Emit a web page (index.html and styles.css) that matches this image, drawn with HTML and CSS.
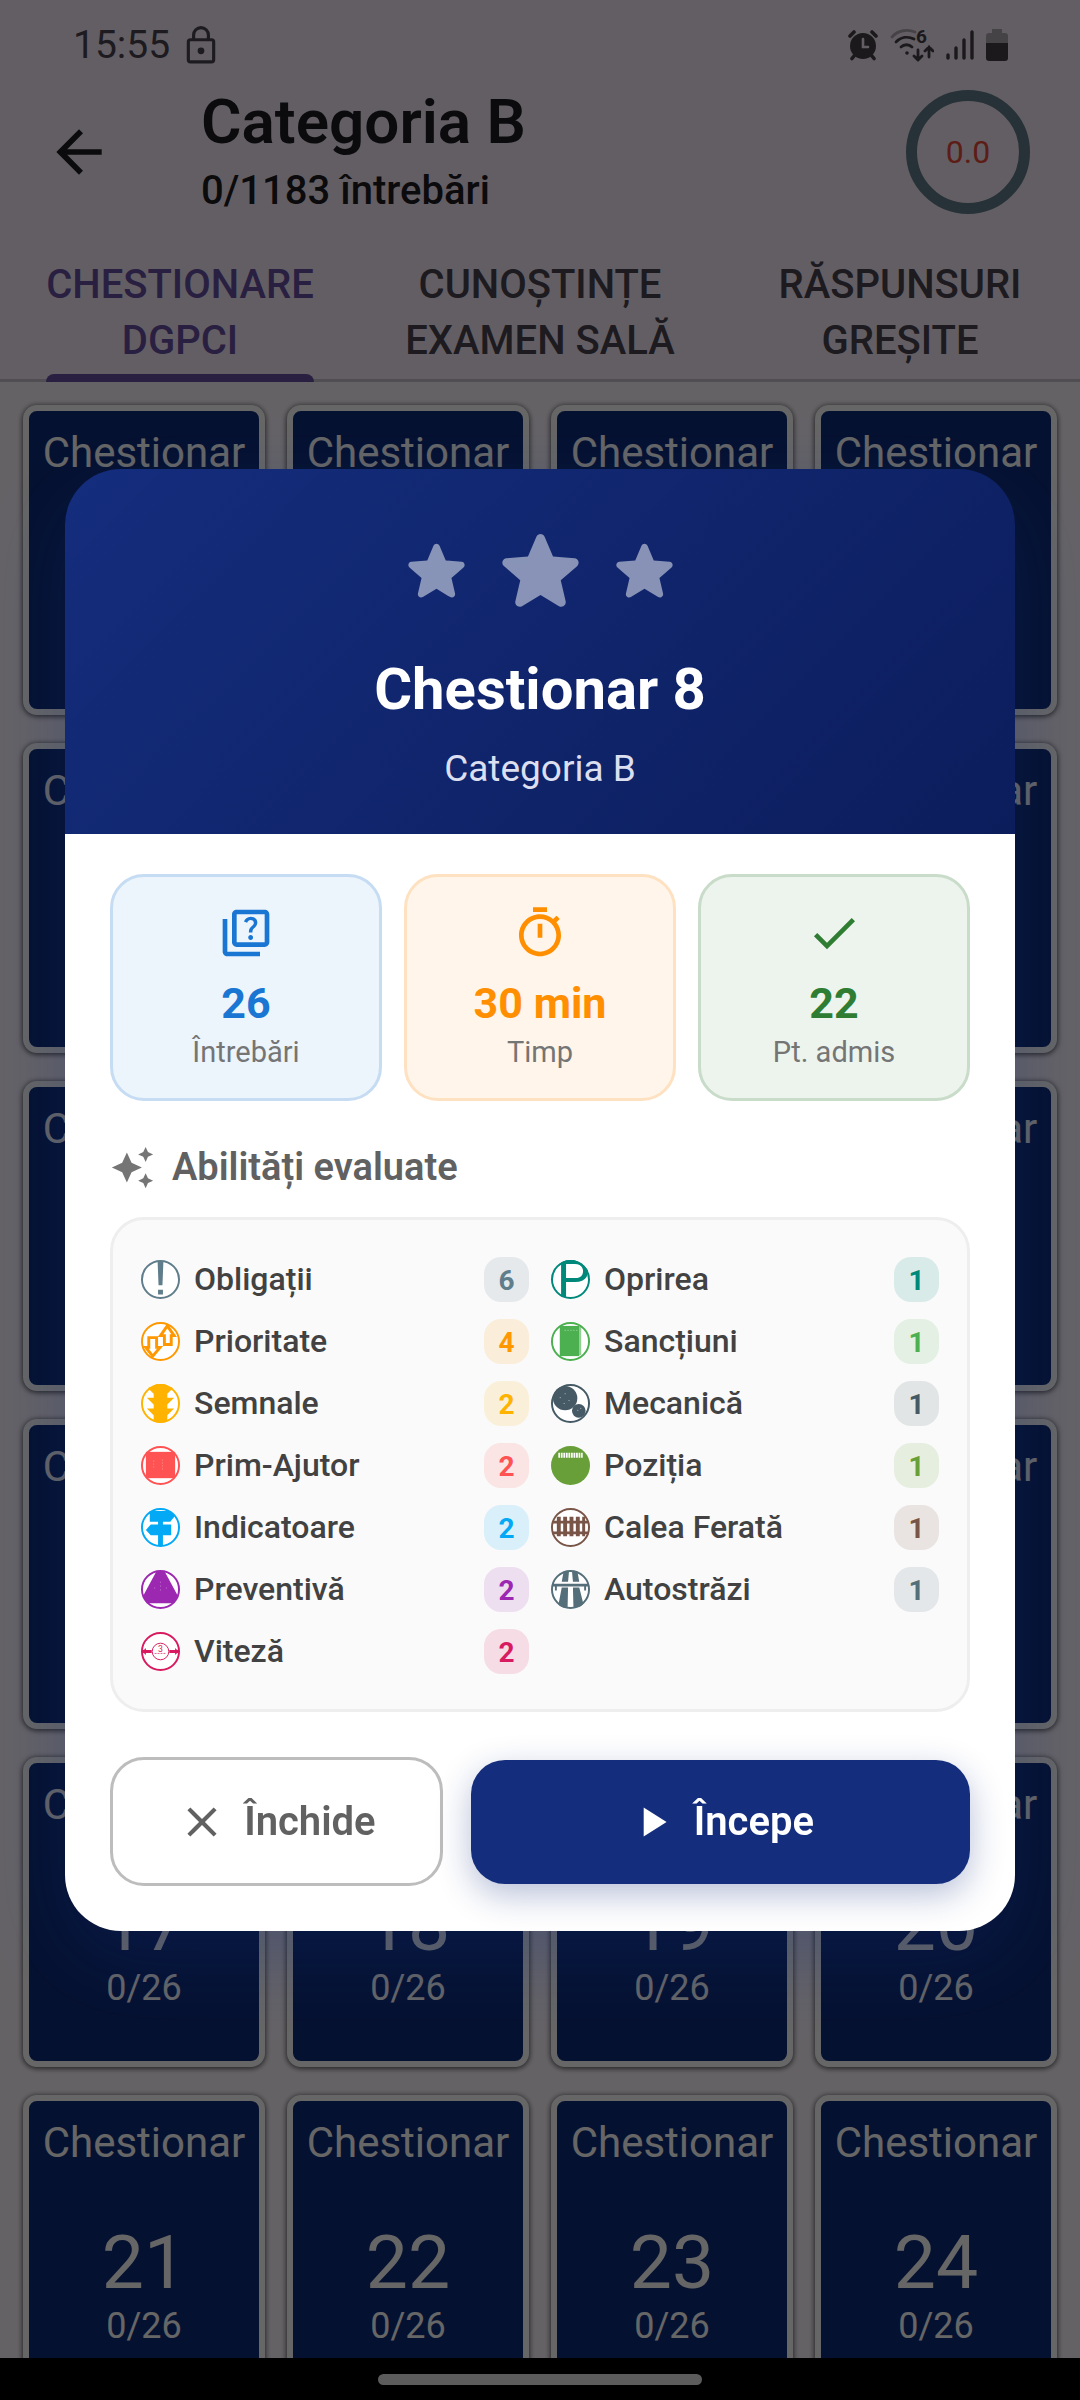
FILE: index.html
```html
<!DOCTYPE html>
<html lang="ro">
<head>
    <meta charset="UTF-8">
    <meta name="viewport" content="width=device-width, initial-scale=1.0">
    <link rel="stylesheet" href="styles.css">
    <title>Categoria B</title>
</head>
<body>
    <div class="app">
        <div class="status-bar">
            <span class="clock">15:55</span>
            <svg class="lock" viewBox="0 0 28 36" fill="none" stroke="currentColor" stroke-width="3">
                <rect x="2" y="13" width="24" height="21" rx="2"/>
                <path d="M7 13V8.500a7 7 0 0 1 14 0V13"/>
                <circle cx="14" cy="23.500" r="3.200" fill="currentColor" stroke="none"/>
            </svg>
            <div class="status-icons">
                <svg width="30" height="34" viewBox="0 0 30 34">
                    <g fill="none" stroke="currentColor" stroke-width="3.600" stroke-linecap="round">
                        <path d="M2 8l4-4M28 8l-4-4M6 28l-2 2.500M24 28l2 2.500"/>
                    </g>
                    <circle cx="15" cy="18" r="13" fill="currentColor"/>
                    <path d="M15 11v8h5" fill="none" stroke="#f7ebfa" stroke-width="2.600" stroke-linecap="round"/>
                </svg>
                <svg width="44" height="34" viewBox="0 0 44 34" fill="none" stroke="currentColor" stroke-width="2.800" stroke-linecap="round">
                    <path d="M2 9C8 2 18 1 25 4" opacity=".4"/>
                    <path d="M6 14c5-5 12-6 18-3M11 19c3-3 8-3 11 0"/>
                    <circle cx="17" cy="25" r="1.800" fill="currentColor" stroke="none"/>
                    <path d="M28 22v10m-4-4l4 4 4-4M39 29V19m-4 4l4-4 4 4"/>
                    <text class="wifi-gen" x="26" y="15">6</text>
                </svg>
                <svg width="28" height="34" viewBox="0 0 28 34" fill="none" stroke="currentColor" stroke-width="3.400" stroke-linecap="round">
                    <path d="M2 27v3M10 20v10M18 12v18M26 4v26"/>
                </svg>
                <svg width="22" height="34" viewBox="0 0 22 34" fill="currentColor">
                    <path d="M6 1h10v4h3a3 3 0 0 1 3 3v7H0V8a3 3 0 0 1 3-3h3z" opacity=".4"/>
                    <path d="M0 15h22v15a3 3 0 0 1-3 3H3a3 3 0 0 1-3-3z"/>
                </svg>
            </div>
        </div>

        <header class="top-bar">
            <button class="back" aria-label="Înapoi">
                <svg width="68" height="68" viewBox="0 0 24 24" fill="currentColor"><path d="M20 11H7.830l5.590-5.590L12 4l-8 8 8 8 1.410-1.410L7.830 13H20v-2z"/></svg>
            </button>
            <div class="headings">
                <h1>Categoria B</h1>
                <p>0/1183 întrebări</p>
            </div>
            <div class="score">0.0</div>
        </header>

        <nav class="tabs">
            <button class="tab active"><span>CHESTIONARE<br>DGPCI</span></button>
            <button class="tab"><span>CUNOȘTINȚE<br>EXAMEN SALĂ</span></button>
            <button class="tab"><span>RĂSPUNSURI<br>GREȘITE</span></button>
        </nav>

        <main class="tests" id="tests"></main>
    </div>

    <div class="overlay">
        <div class="dialog" role="dialog" aria-labelledby="dialog-title">
            <div class="dialog-header">
                <div class="stars">
                    <svg class="star" viewBox="0 0 24 24"><path d="M12 17.270l4.150 2.510c.76.46 1.690-.22 1.490-1.080l-1.100-4.720 3.670-3.180c.67-.58.31-1.680-.57-1.750l-4.830-.41-1.890-4.460c-.34-.81-1.500-.81-1.840 0L9.190 8.630l-4.830.41c-.88.07-1.240 1.170-.57 1.750l3.670 3.180-1.100 4.720c-.2.86.73 1.540 1.490 1.080z"/></svg>
                    <svg class="star star-big" viewBox="0 0 24 24"><path d="M12 17.270l4.150 2.510c.76.46 1.690-.22 1.490-1.080l-1.100-4.720 3.670-3.180c.67-.58.31-1.680-.57-1.750l-4.830-.41-1.890-4.460c-.34-.81-1.500-.81-1.840 0L9.190 8.630l-4.830.41c-.88.07-1.240 1.170-.57 1.750l3.670 3.180-1.100 4.720c-.2.86.73 1.540 1.490 1.080z"/></svg>
                    <svg class="star" viewBox="0 0 24 24"><path d="M12 17.270l4.150 2.510c.76.46 1.690-.22 1.490-1.080l-1.100-4.720 3.670-3.180c.67-.58.31-1.680-.57-1.750l-4.830-.41-1.890-4.460c-.34-.81-1.500-.81-1.840 0L9.190 8.630l-4.830.41c-.88.07-1.240 1.170-.57 1.750l3.670 3.180-1.100 4.720c-.2.86.73 1.540 1.490 1.080z"/></svg>
                </div>
                <h2 id="dialog-title">Chestionar 8</h2>
                <p>Categoria B</p>
            </div>

            <div class="dialog-body">
                <div class="stats">
                    <div class="stat blue">
                        <svg viewBox="0 0 24 24" fill="currentColor"><path d="M4 6H2v14c0 1.100.9 2 2 2h14v-2H4V6zm16-4H8c-1.100 0-2 .9-2 2v12c0 1.100.9 2 2 2h12c1.100 0 2-.9 2-2V4c0-1.100-.9-2-2-2zm0 14H8V4h12v12zm-6.490-5.840c.41-.73 1.180-1.160 1.630-1.800.48-.68.21-1.940-1.140-1.940-.88 0-1.320.67-1.500 1.230l-1.370-.57C11.510 5.960 12.520 5 13.990 5c1.230 0 2.080.56 2.510 1.260.37.6.58 1.730.01 2.570-.63.93-1.230 1.210-1.560 1.810-.13.24-.18.4-.18 1.180h-1.520c.01-.41-.06-1.080.26-1.660zm-.56 3.790c0-.59.47-1.040 1.050-1.040.59 0 1.040.45 1.040 1.040 0 .58-.44 1.050-1.040 1.050-.58 0-1.050-.47-1.050-1.050z"/></svg>
                        <strong>26</strong>
                        <span>Întrebări</span>
                    </div>
                    <div class="stat orange">
                        <svg viewBox="0 0 24 24" fill="currentColor"><path d="M15 1H9v2h6V1zm-4 13h2V8h-2v6zm8.030-6.610l1.420-1.420c-.43-.51-.9-.99-1.410-1.410l-1.420 1.420C16.070 4.740 14.120 4 12 4c-4.970 0-9 4.030-9 9s4.020 9 9 9 9-4.030 9-9c0-2.120-.74-4.070-1.970-5.610zM12 20c-3.870 0-7-3.130-7-7s3.130-7 7-7 7 3.130 7 7-3.130 7-7 7z"/></svg>
                        <strong>30 min</strong>
                        <span>Timp</span>
                    </div>
                    <div class="stat green">
                        <svg viewBox="0 0 24 24" fill="currentColor"><path d="M9 16.170L4.830 12l-1.420 1.410L9 19 21 7l-1.410-1.410z"/></svg>
                        <strong>22</strong>
                        <span>Pt. admis</span>
                    </div>
                </div>

                <h3>
                    <svg viewBox="0 0 24 24" fill="currentColor"><path d="M19 9l1.250-2.750L23 5l-2.750-1.250L19 1l-1.250 2.750L15 5l2.750 1.250L19 9zm-7.500.5L9 4 6.500 9.500 1 12l5.500 2.500L9 20l2.500-5.500L17 12l-5.500-2.500zM19 15l-1.250 2.750L15 19l2.750 1.250L19 23l1.250-2.750L23 19l-2.750-1.250L19 15z"/></svg>
                    Abilități evaluate
                </h3>

                <ul class="skills">
                    <li class="slate">
                        <svg viewBox="0 0 40 40"><circle class="ring" cx="20" cy="20" r="19"/><path d="M17 1h6l-1 25h-4zM17.500 30.500h5v5h-5z"/></svg>
                        <span>Obligații</span><b>6</b>
                    </li>
                    <li class="teal">
                        <svg viewBox="0 0 40 40"><clipPath id="disc"><circle cx="20" cy="20" r="20"/></clipPath><circle class="ring" cx="20" cy="20" r="19"/><text class="sign-p" x="6" y="38" clip-path="url(#disc)">P</text></svg>
                        <span>Oprirea</span><b>1</b>
                    </li>
                    <li class="amber">
                        <svg viewBox="0 0 40 40"><circle class="ring" cx="20" cy="20" r="19"/><path class="line" d="M8 16h8v10h3.500l-7.500 9-7-9H8zM24 23V14h-4l7-10 7 10h-3v9z"/></svg>
                        <span>Prioritate</span><b>4</b>
                    </li>
                    <li class="lime">
                        <svg viewBox="0 0 40 40"><circle class="ring" cx="20" cy="20" r="19"/><path d="M9 4h20v31H9z"/><path d="M30 5v29" stroke="currentColor" stroke-width="2" opacity=".6"/><path d="M14 8.500h13" stroke="#fff" stroke-dasharray="1 2" opacity=".6"/></svg>
                        <span>Sancțiuni</span><b>1</b>
                    </li>
                    <li class="yellow">
                        <svg viewBox="0 0 40 40"><circle class="ring" cx="20" cy="20" r="19"/><path clip-path="url(#disc)" d="M13 0h14v3h7l-7 7v4h7l-7 7v4h7l-7 7v8H13v-8l-7-7h7v-4l-7-7h7v-4L6 3h7z"/></svg>
                        <span>Semnale</span><b>2</b>
                    </li>
                    <li class="steel">
                        <svg viewBox="0 0 40 40"><circle class="ring" cx="20" cy="20" r="19"/><circle cx="14.500" cy="14.500" r="12.500"/><circle cx="28.500" cy="27.500" r="7"/><path d="M9 14h1M14 10h1M18 17h1M13 20h1M27 27h1M30 25h1" stroke="#fff" opacity=".6"/></svg>
                        <span>Mecanică</span><b>1</b>
                    </li>
                    <li class="red">
                        <svg viewBox="0 0 40 40"><circle class="ring" cx="20" cy="20" r="19"/><path d="M5 6h30v27H5z"/><path d="M13 15v9M22 14v11" stroke="#fff" stroke-dasharray="1 2" opacity=".4"/></svg>
                        <span>Prim-Ajutor</span><b>2</b>
                    </li>
                    <li class="olive">
                        <svg viewBox="0 0 40 40"><circle cx="20" cy="20" r="20"/><path d="M7.500 9.500h25" stroke="#fff" stroke-width="5" stroke-dasharray="1.800 .8"/></svg>
                        <span>Poziția</span><b>1</b>
                    </li>
                    <li class="sky">
                        <svg viewBox="0 0 40 40"><circle class="ring" cx="20" cy="20" r="19"/><path d="M9 3h20l6 5-5 6H9zM10 17h21v11H10l-5-5.500zM17.500 13h5v26h-5z"/></svg>
                        <span>Indicatoare</span><b>2</b>
                    </li>
                    <li class="brown">
                        <svg viewBox="0 0 40 40"><circle class="ring" cx="20" cy="20" r="19"/><path d="M1 13h38v3H1zM1 24h38v3H1zM6 9h4v20H6zM12.500 9h4v20h-4zM19 9h4v20h-4zM25.500 9h4v20h-4zM32 9h3v20h-3z"/></svg>
                        <span>Calea Ferată</span><b>1</b>
                    </li>
                    <li class="purple">
                        <svg viewBox="0 0 40 40"><circle class="ring" cx="20" cy="20" r="19"/><path d="M16 1h8l14 26-4 7H6l-4-7z"/><path d="M20 12v12M14 18v3M26 18v3" stroke="#fff" stroke-dasharray="1 3" opacity=".4"/></svg>
                        <span>Preventivă</span><b>2</b>
                    </li>
                    <li class="asphalt">
                        <svg viewBox="0 0 40 40"><circle class="ring" cx="20" cy="20" r="19"/><path clip-path="url(#disc)" d="M13 1h5.500l-1 11H11zM21.500 1H27l2 11h-6.500zM1 14h38v3h-3v4h-2v-4H6v4H4v-4H1zM11 18h6.500L17 39H7zM22.500 18H29l5 20H23z"/></svg>
                        <span>Autostrăzi</span><b>1</b>
                    </li>
                    <li class="pink">
                        <svg viewBox="0 0 40 40"><circle class="ring" cx="20" cy="20" r="19"/><circle class="thin" cx="20" cy="20" r="8.500"/><path d="M1 18.500h2l2-2v2h6v3H5v2l-2-2H1zM39 18.500h-2l-2-2v2h-6v3h6v2l2-2h2z"/><text class="speed" x="20" y="20">3</text><path d="M14 22h12" stroke="currentColor" stroke-dasharray="2 1" opacity=".7"/></svg>
                        <span>Viteză</span><b>2</b>
                    </li>
                </ul>

                <div class="actions">
                    <button class="btn btn-close">
                        <svg viewBox="0 0 24 24" fill="currentColor"><path d="M19 6.410L17.590 5 12 10.590 6.410 5 5 6.410 10.590 12 5 17.590 6.410 19 12 13.410 17.590 19 19 17.590 13.410 12z"/></svg>
                        Închide
                    </button>
                    <button class="btn btn-start">
                        <svg viewBox="0 0 24 24" fill="currentColor"><path d="M8 5v14l11-7z"/></svg>
                        Începe
                    </button>
                </div>
            </div>
        </div>
    </div>

    <div class="nav-bar"><div class="handle"></div></div>

    <script>
        const tests = document.getElementById("tests");

        for (let i = 1; i <= 24; i++) {
            const card = document.createElement("button");
            card.className = "test";
            card.innerHTML = `<span class="test-label">Chestionar</span>
                <span class="test-number">${i}</span>
                <span class="test-progress">0/26</span>`;
            tests.appendChild(card);
        }
    </script>
</body>
</html>
```
FILE: styles.css
```css
* {
    box-sizing: border-box;
}

body {
    margin: 0;
    font-family: Roboto, "Noto Sans", sans-serif;
    color: #1d1b20;
    background-color: #000;
}

h1, h2, h3, p, ul {
    margin: 0;
    padding: 0;
}

button {
    font-family: inherit;
    border: none;
    padding: 0;
    cursor: pointer;
}

svg {
    display: block;
    flex-shrink: 0;
}

.app {
    height: 100vh;
    padding-bottom: 42px;
    display: flex;
    flex-direction: column;
    overflow: hidden;
    background-color: #fcf6fe;
    background-clip: content-box;
}

/* status bar */
.status-bar {
    display: flex;
    align-items: center;
    height: 90px;
    flex-shrink: 0;
    padding: 0 72px 0 73px;
    color: #49454f;
    background-color: #f7ebfa;
}

.clock {
    font-size: 39px;
}

.lock {
    width: 30px;
    height: 38px;
    margin-left: 16px;
}

.status-icons {
    display: flex;
    align-items: center;
    gap: 12px;
    margin-left: auto;
    color: #444046;
}

.wifi-gen {
    font-size: 19px;
    font-weight: 700;
    fill: currentColor;
    stroke: none;
}

/* header */
.top-bar {
    display: flex;
    align-items: center;
    flex-shrink: 0;
    padding: 0 50px 43px 45px;
    background-color: #f7ebfa;
}

.back {
    background: none;
    color: inherit;
}

.headings {
    height: 124px;
    margin-left: 88px;
    display: flex;
    flex-direction: column;
    justify-content: center;
    gap: 8px;
}

.headings h1 {
    font-size: 62px;
    line-height: 70px;
    font-weight: 600;
}

.headings p {
    font-size: 40px;
    line-height: 52px;
    font-weight: 500;
}

.score {
    width: 124px;
    height: 124px;
    margin-left: auto;
    border: 11px solid #607d8b;
    border-radius: 50%;
    display: flex;
    align-items: center;
    justify-content: center;
    font-size: 32px;
    color: #e94a3b;
}

/* tabs */
.tabs {
    display: flex;
    flex-shrink: 0;
    background-color: #f7ebfa;
    box-shadow: inset 0 -3px #cac4d0;
}

.tab {
    flex: 1;
    background: none;
    font-size: 40px;
    line-height: 56px;
    font-weight: 500;
    color: #49454f;
}

.tab span {
    display: inline-block;
}

.tab span::after {
    content: "";
    display: block;
    height: 8px;
    margin-top: 5px;
    border-radius: 8px 8px 0 0;
}

.tab.active {
    color: #6750a4;
}

.tab.active span::after {
    background-color: #6750a4;
}

/* test cards */
.tests {
    display: grid;
    grid-template-columns: repeat(4, 1fr);
    grid-auto-rows: 310px;
    gap: 28px 22px;
    padding: 23px 23px 0;
    min-height: 0;
    overflow: hidden;
}

.test {
    display: flex;
    flex-direction: column;
    align-items: center;
    justify-content: flex-start;
    padding-top: 18px;
    border: 6px solid #fff;
    border-radius: 14px;
    background-color: #0d2b78;
    color: #fff;
    box-shadow: 0 1px 5px 1px rgba(0, 0, 0, 0.6);
}

.test-label {
    font-size: 42px;
    line-height: 48px;
    margin-bottom: 52px;
}

.test-number {
    font-size: 75px;
    line-height: 86px;
}

.test-progress {
    font-size: 36px;
    line-height: 42px;
}

/* dialog */
.overlay {
    position: fixed;
    inset: 0;
    display: flex;
    align-items: center;
    justify-content: center;
    padding: 0 65px;
    background-color: rgba(0, 0, 0, 0.6);
}

.dialog {
    width: 100%;
    border-radius: 56px;
    box-shadow: 0 28px 84px rgba(20, 45, 125, 0.3);
}

.dialog-header {
    padding: 49px 45px 44px;
    border-radius: 56px 56px 0 0;
    background: linear-gradient(135deg, #142d7d, #0c1d5c);
    color: #fff;
    text-align: center;
}

.stars {
    display: flex;
    align-items: center;
    justify-content: center;
    gap: 11px;
    margin-bottom: 31px;
}

.star {
    width: 79px;
    height: 79px;
    fill: rgba(255, 255, 255, 0.5);
}

.star-big {
    width: 107px;
    height: 107px;
}

.dialog-header h2 {
    font-size: 58px;
    line-height: 66px;
    font-weight: 700;
    margin-bottom: 26px;
}

.dialog-header p {
    font-size: 37px;
    line-height: 42px;
    color: #dcdff0;
}

.dialog-body {
    padding: 40px 45px 45px;
    border-radius: 0 0 56px 56px;
    background-color: #fff;
}

.stats {
    display: flex;
    gap: 22px;
}

.stat {
    flex: 1;
    display: flex;
    flex-direction: column;
    align-items: center;
    padding: 28px 0 29px;
    border: 3px solid;
    border-radius: 34px;
}

.stat svg {
    width: 56px;
    height: 56px;
    margin-bottom: 17px;
}

.stat strong {
    font-size: 43px;
    line-height: 50px;
    margin-bottom: 7px;
}

.stat span {
    font-size: 29px;
    line-height: 34px;
    color: #757575;
}

.stat.blue {
    color: #1976d2;
    background-color: #ecf4fc;
    border-color: #c5dcf3;
}

.stat.orange {
    color: #ff8f00;
    background-color: #fff5ea;
    border-color: #fee1c1;
}

.stat.green {
    color: #2e7d32;
    background-color: #edf4ed;
    border-color: #c8dcc9;
}

.dialog-body h3 {
    display: flex;
    align-items: center;
    gap: 17px;
    margin: 43px 0 27px;
    font-size: 38px;
    line-height: 46px;
    font-weight: 600;
    color: #616161;
}

.dialog-body h3 svg {
    width: 45px;
    height: 45px;
    color: #757575;
}

.skills {
    display: grid;
    grid-template-columns: 1fr 1fr;
    grid-auto-rows: 62px;
    column-gap: 22px;
    padding: 28px 28px 27px;
    border: 3px solid #eee;
    border-radius: 34px;
    background-color: #fafafa;
    list-style: none;
}

.skills li {
    display: flex;
    align-items: center;
    gap: 14px;
}

.skills svg {
    width: 39px;
    height: 39px;
    fill: currentColor;
}

.skills .ring {
    fill: #fff;
    stroke: currentColor;
    stroke-width: 2;
}

.skills .line,
.skills .thin {
    fill: none;
    stroke: currentColor;
    stroke-width: 3;
}

.skills .thin {
    stroke-width: 1;
}

.sign-p {
    font-size: 54px;
    font-weight: 400;
}

.speed {
    font-size: 9px;
    text-anchor: middle;
}

.skills span {
    flex: 1;
    font-size: 32px;
    font-weight: 500;
    color: #424242;
}

.skills b {
    width: 45px;
    height: 45px;
    border-radius: 17px;
    font-size: 28px;
    line-height: 47px;
    text-align: center;
    background-color: color-mix(in srgb, currentColor 13%, transparent);
}

.slate { color: #607d8b; }
.amber { color: #ff9800; }
.yellow { color: #ffb300; }
.red { color: #ff5252; }
.sky { color: #03a9f4; }
.purple { color: #9c27b0; }
.pink { color: #d81b60; }
.teal { color: #00897b; }
.lime { color: #4caf50; }
.steel { color: #455a64; }
.olive { color: #689f38; }
.brown { color: #795548; }
.asphalt { color: #546e7a; }

.actions {
    display: grid;
    grid-template-columns: 2fr 3fr;
    align-items: center;
    gap: 28px;
    margin-top: 45px;
}

.btn {
    height: 129px;
    display: flex;
    align-items: center;
    justify-content: center;
    gap: 17px;
    border-radius: 34px;
    font-size: 40px;
    font-weight: 600;
}

.btn svg {
    width: 50px;
    height: 50px;
}

.btn-close {
    border: 3px solid #bdbdbd;
    background-color: #fff;
    color: #616161;
}

.btn-start {
    height: 124px;
    background-color: #142d7d;
    color: #fff;
    box-shadow: 0 11px 34px rgba(20, 45, 125, 0.3);
}

/* gesture bar */
.nav-bar {
    position: fixed;
    left: 0;
    right: 0;
    bottom: 0;
    height: 42px;
    display: flex;
    align-items: center;
    justify-content: center;
    background-color: #000;
}

.handle {
    width: 30%;
    height: 11px;
    border-radius: 6px;
    background-color: #5c5c5c;
}
```
